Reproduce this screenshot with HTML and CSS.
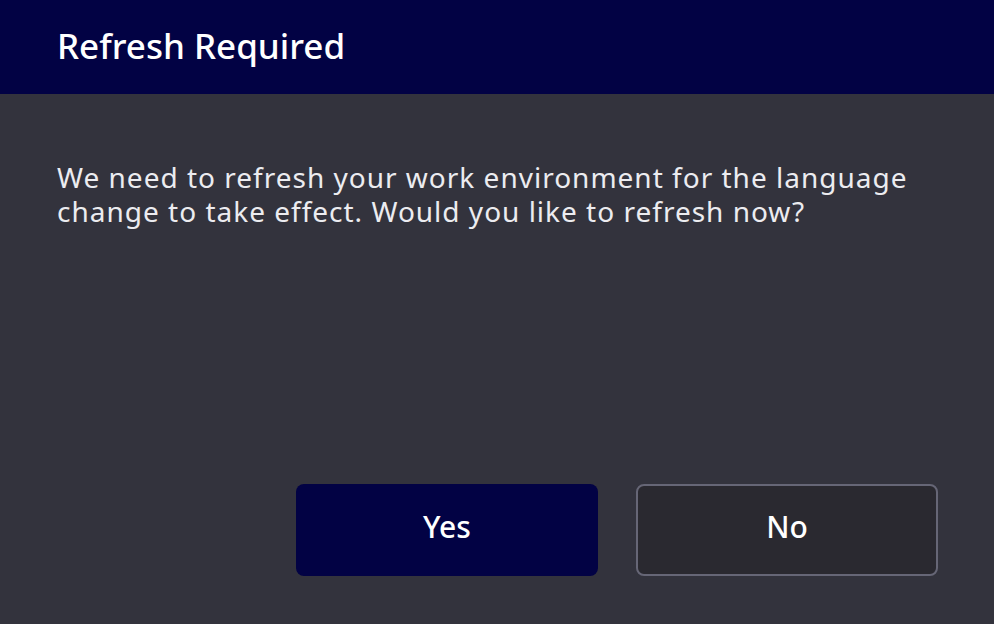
FILE: index.html
```html
<!DOCTYPE html>
<html lang="en">
<head>
  <meta charset="UTF-8" />
  <title>Refresh Required</title>
  <link rel="stylesheet" href="styles.css">
</head>
<body>
  <div class="dialog">
    <div class="dialog-header">
      <h2>Refresh Required</h2>
    </div>
    <div class="dialog-body">
      <p>We need to refresh your work environment for the language change to take effect. Would you like to refresh now?</p>
    </div>
    <div class="dialog-buttons">
      <button class="btn btn-primary">Yes</button>
      <button class="btn btn-secondary">No</button>
    </div>
  </div>
</body>
</html>
```

FILE: styles.css
```css
body {
  margin: 0;
  padding: 0;
  background-color: #33333d;
  font-family: 'Noto Sans', 'Open Sans', sans-serif;
  color: #ececf0;
}

.dialog {
  display: flex;
  flex-direction: column;
  height: 624px;
}

.dialog-header {
  background-color: #020244;
  height: 94px;
  display: flex;
  align-items: center;
  padding: 0 57px 4px;
  box-sizing: border-box;
}

h2 {
  margin: 0;
  font-size: 35px;
  font-weight: 500;
  color: #fff;
}

.dialog-body {
  flex: 1;
  padding: 66px 57px 0;
}

.dialog-body p {
  margin: 0;
  font-size: 28px;
  line-height: 34px;
  letter-spacing: 1px;
  max-width: 880px;
}

.dialog-buttons {
  display: flex;
  justify-content: flex-end;
  gap: 38px;
  padding: 0 56px 48px;
}

.btn {
  width: 302px;
  height: 92px;
  padding: 0 0 8px;
  border-radius: 8px;
  font-family: inherit;
  font-size: 30px;
  font-weight: 500;
  color: #fff;
  cursor: pointer;
}

.btn-primary {
  background-color: #020244;
  border: none;
}

.btn-secondary {
  background-color: #2a2930;
  border: 2px solid #666676;
}
```
